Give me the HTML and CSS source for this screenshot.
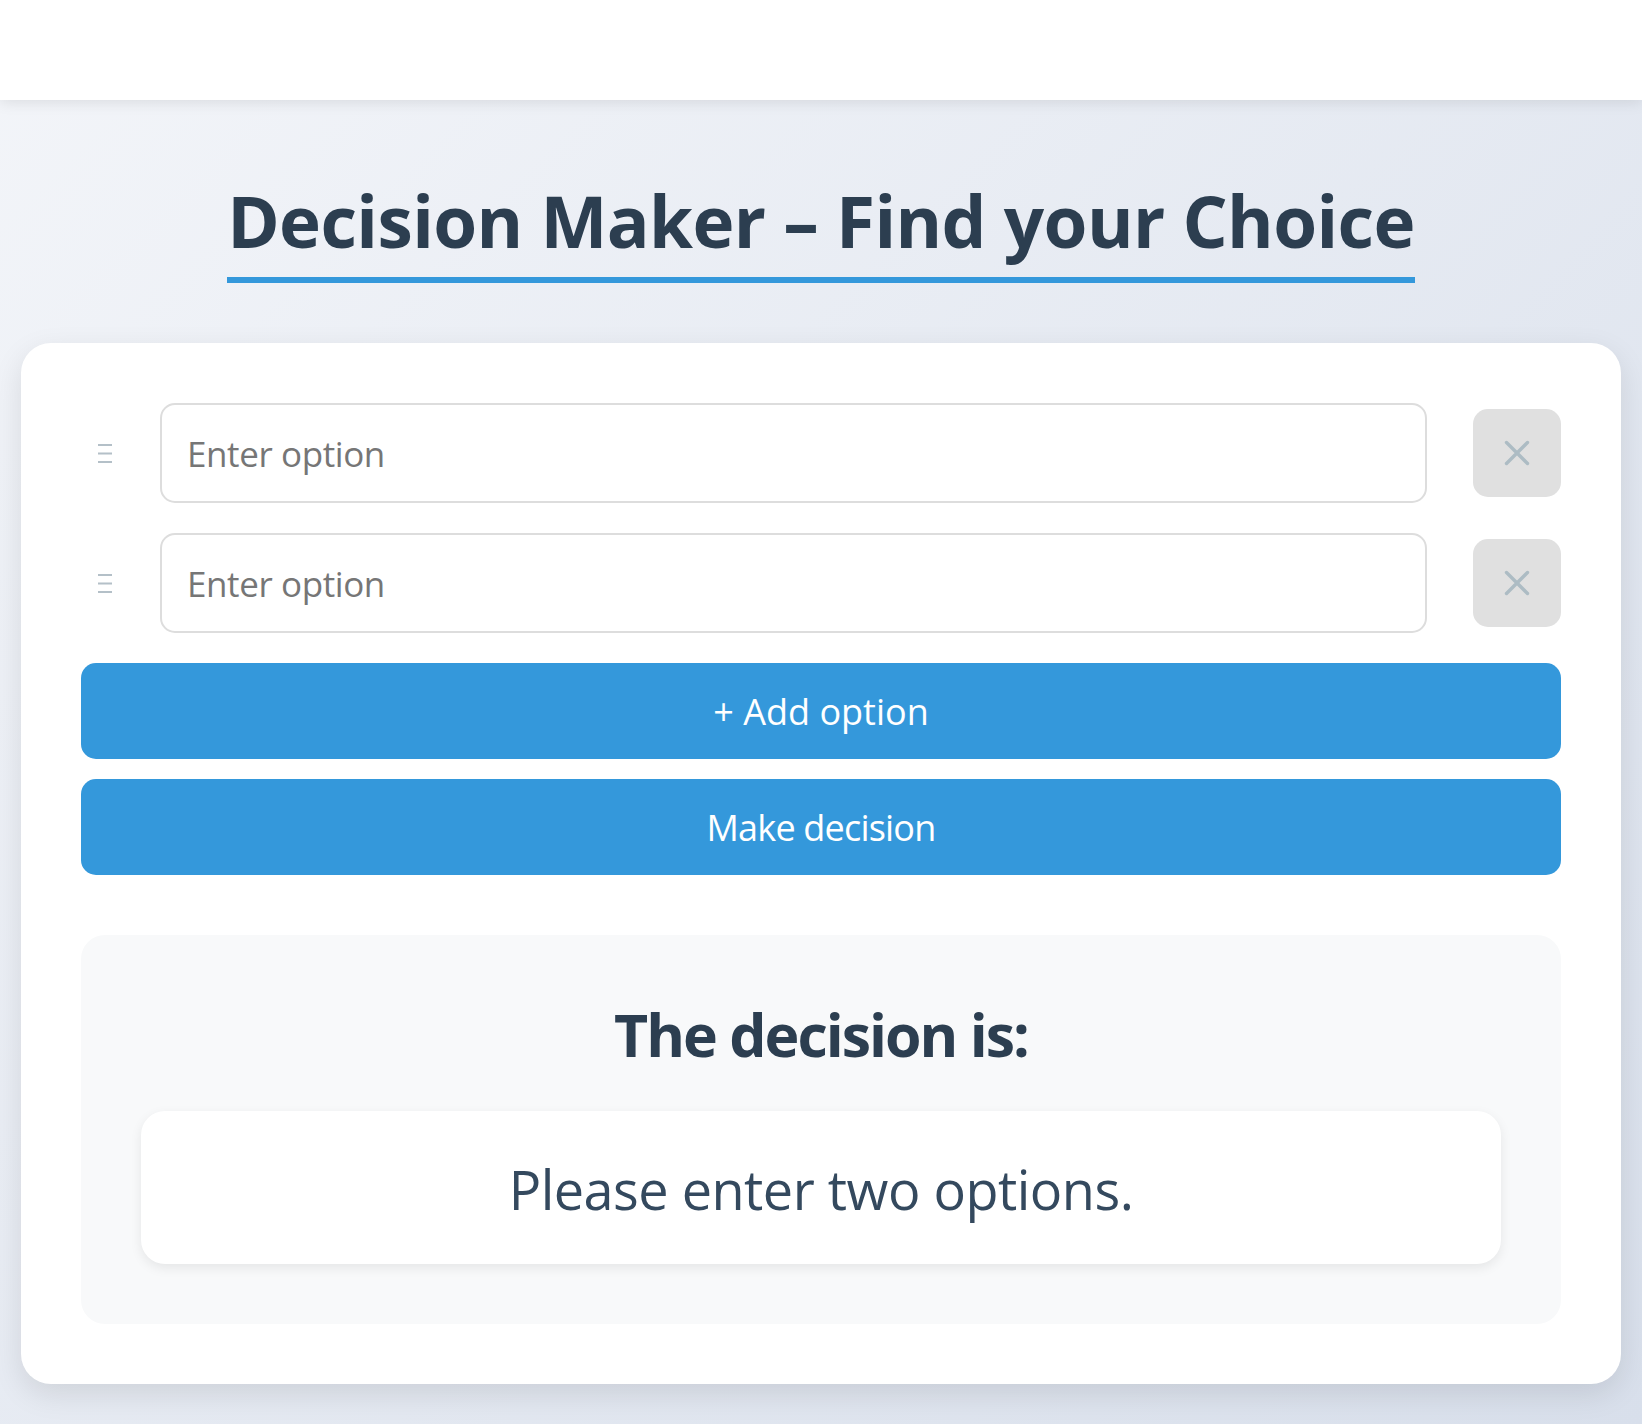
FILE: index.html
```html
<!DOCTYPE html>
<html lang="en">
<head>
<meta charset="utf-8">
<title>Decision Maker</title>
<link rel="stylesheet" href="styles.css">
</head>
<body>
<header class="topbar"></header>
<main class="page">
  <div class="title-wrap">
    <h1 class="title">Decision Maker – Find your Choice</h1>
  </div>
  <section class="card">
    <div class="option-row">
      <span class="handle" aria-hidden="true">
        <svg width="14" height="20" viewBox="0 0 14 20"><rect x="0" y="1" width="14" height="2" fill="#b4c0c8"/><rect x="0" y="9.5" width="14" height="2" fill="#b4c0c8"/><rect x="0" y="18" width="14" height="2" fill="#b4c0c8"/></svg>
      </span>
      <input class="option-input" type="text" placeholder="Enter option">
      <button class="remove-btn" type="button" aria-label="Remove option">
        <svg width="26" height="26" viewBox="0 0 26 26"><path d="M2.5 2.5 L23.5 23.5 M23.5 2.5 L2.5 23.5" stroke="#adbcc4" stroke-width="3.4" stroke-linecap="round" fill="none"/></svg>
      </button>
    </div>
    <div class="option-row">
      <span class="handle" aria-hidden="true">
        <svg width="14" height="20" viewBox="0 0 14 20"><rect x="0" y="1" width="14" height="2" fill="#b4c0c8"/><rect x="0" y="9.5" width="14" height="2" fill="#b4c0c8"/><rect x="0" y="18" width="14" height="2" fill="#b4c0c8"/></svg>
      </span>
      <input class="option-input" type="text" placeholder="Enter option">
      <button class="remove-btn" type="button" aria-label="Remove option">
        <svg width="26" height="26" viewBox="0 0 26 26"><path d="M2.5 2.5 L23.5 23.5 M23.5 2.5 L2.5 23.5" stroke="#adbcc4" stroke-width="3.4" stroke-linecap="round" fill="none"/></svg>
      </button>
    </div>
    <button class="btn-primary btn-add" type="button">+ Add option</button>
    <button class="btn-primary btn-make" type="button">Make decision</button>
    <div class="result">
      <h2 class="result-title">The decision is:</h2>
      <div class="result-box">Please enter two options.</div>
    </div>
  </section>
</main>
</body>
</html>
```

FILE: styles.css
```css
* {
  box-sizing: border-box;
}

html, body {
  margin: 0;
  padding: 0;
}

body {
  min-height: 100vh;
  font-family: "Open Sans", "Noto Sans", "DejaVu Sans", sans-serif;
  color: #2c3e50;
  background: linear-gradient(135deg, #f3f5f9 0%, #d8dfeb 100%);
  background-attachment: fixed;
}

.topbar {
  height: 100px;
  background: #ffffff;
  box-shadow: 0 2px 14px rgba(0, 0, 0, 0.1);
  position: relative;
  z-index: 1;
}

.page {
  padding: 78px 21px 40px;
}

.title-wrap {
  text-align: center;
  margin-bottom: 60px;
}

.title {
  display: inline-block;
  margin: 0;
  font-size: 71px;
  line-height: 86px;
  font-weight: 700;
  letter-spacing: -0.6px;
  color: #2c3e50;
  padding-bottom: 13px;
  border-bottom: 6px solid #3498db;
}

.card {
  max-width: 1600px;
  margin: 0 auto;
  background: #ffffff;
  border-radius: 30px;
  padding: 60px;
  box-shadow: 0 10px 30px rgba(0, 0, 0, 0.1);
}

.option-row {
  display: flex;
  align-items: center;
  margin-bottom: 30px;
}

.handle {
  display: flex;
  width: 14px;
  margin: 0 48px 0 17px;
}

.option-input {
  flex: 1;
  height: 100px;
  border: 2px solid #dddddd;
  border-radius: 15px;
  padding: 0 25px;
  font-family: inherit;
  font-size: 35px;
  letter-spacing: -0.4px;
  color: #333333;
  background: #ffffff;
  outline: none;
}

.option-input::placeholder {
  color: #767676;
  opacity: 1;
}

.remove-btn {
  width: 88px;
  height: 88px;
  margin-left: 46px;
  border: none;
  border-radius: 15px;
  background: #e0e0e0;
  display: flex;
  align-items: center;
  justify-content: center;
  padding: 0;
}

.btn-primary {
  display: block;
  width: 100%;
  height: 96px;
  border: none;
  border-radius: 15px;
  background: #3498db;
  color: #ffffff;
  font-family: inherit;
  font-size: 36px;
  padding: 0;
}

.btn-add {
  margin-bottom: 20px;
}

.btn-make {
  letter-spacing: -0.8px;
}

.result {
  margin-top: 60px;
  background: #f8f9fa;
  border-radius: 24px;
  padding: 60px;
  text-align: center;
}

.result-title {
  margin: 3px 0 41px;
  font-size: 59px;
  line-height: 72px;
  font-weight: 700;
  letter-spacing: -2px;
  color: #2c3e50;
}

.result-box {
  background: #ffffff;
  border-radius: 24px;
  padding: 42px 20px 38px;
  font-size: 54px;
  line-height: 73px;
  letter-spacing: -0.5px;
  color: #34495e;
  box-shadow: 0 4px 12px rgba(0, 0, 0, 0.08);
}
```
